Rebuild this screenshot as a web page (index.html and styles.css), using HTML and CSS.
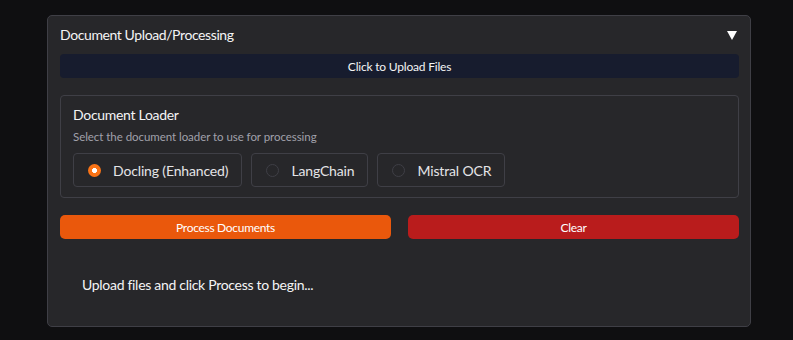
FILE: index.html
```html
<!DOCTYPE html>
<html>
<head>
<meta charset="utf-8">
<link rel="stylesheet" href="styles.css">
</head>
<body>
<div class="panel">
  <div class="panel-header">
    <span class="panel-title">Document Upload/Processing</span>
    <svg class="caret" width="10" height="9" viewBox="0 0 10 9"><polygon points="0,0 10,0 5,9" fill="#ffffff"/></svg>
  </div>
  <button class="upload-btn">Click to Upload Files</button>
  <div class="loader-box">
    <div class="loader-title">Document Loader</div>
    <div class="loader-sub">Select the document loader to use for processing</div>
    <div class="options">
      <label class="option"><span class="radio checked"></span><span class="opt-label">Docling (Enhanced)</span></label>
      <label class="option"><span class="radio"></span><span class="opt-label">LangChain</span></label>
      <label class="option"><span class="radio"></span><span class="opt-label">Mistral OCR</span></label>
    </div>
  </div>
  <div class="actions">
    <button class="btn btn-process">Process Documents</button>
    <button class="btn btn-clear">Clear</button>
  </div>
  <div class="status">Upload files and click Process to begin...</div>
</div>
</body>
</html>
```
FILE: styles.css
```css
html, body {
  margin: 0;
  padding: 0;
  background: #0f0f11;
}
body {
  padding: 15px 0 0 47px;
  font-family: Lato, "Noto Sans", sans-serif;
  color: #f4f4f5;
}
.panel {
  box-sizing: border-box;
  width: 704px;
  height: 312px;
  background: #27272a;
  border: 1px solid #3f3f46;
  border-radius: 5px;
  padding: 0 11px 0 12px;
}
.panel-header {
  display: flex;
  align-items: center;
  justify-content: space-between;
  height: 20px;
  padding: 9px 1px 9px 0;
}
.panel-title {
  font-size: 14px;
  line-height: 20px;
  letter-spacing: -0.4px;
  color: #f4f4f5;
}
.caret {
  display: block;
  margin-right: 1px;
}
.upload-btn {
  display: block;
  width: 100%;
  height: 24px;
  border: none;
  border-radius: 4px;
  background: #171c2e;
  color: #f4f4f5;
  font-family: inherit;
  font-size: 12px;
  letter-spacing: -0.2px;
  padding: 0;
}
.loader-box {
  margin-top: 17px;
  box-sizing: border-box;
  height: 103px;
  border: 1px solid #3f3f46;
  border-radius: 4px;
  padding: 9px 12px 0 12px;
}
.loader-title {
  font-size: 14px;
  line-height: 20px;
  letter-spacing: -0.3px;
  color: #f4f4f5;
}
.loader-sub {
  margin-top: 4px;
  font-size: 11.5px;
  line-height: 16px;
  letter-spacing: -0.05px;
  color: #a1a1aa;
}
.options {
  margin-top: 8px;
  display: flex;
  gap: 9px;
}
.option {
  box-sizing: border-box;
  height: 34px;
  display: flex;
  align-items: center;
  gap: 12px;
  padding: 0 13px 0 14px;
  border: 1px solid #3f3f46;
  border-radius: 4px;
}
.radio {
  box-sizing: border-box;
  width: 13px;
  height: 13px;
  border-radius: 50%;
  border: 1px solid #3f3f46;
  background: #27272a;
}
.radio.checked {
  border: none;
  background: radial-gradient(circle, #ffffff 0 2.2px, #f97316 2.8px);
}
.opt-label {
  font-size: 14px;
  letter-spacing: -0.15px;
  color: #e4e4e7;
}
.actions {
  margin-top: 17px;
  display: flex;
  gap: 17px;
}
.btn {
  flex: 1;
  height: 24px;
  border: none;
  border-radius: 5px;
  color: #ffffff;
  font-family: inherit;
  font-size: 12px;
  letter-spacing: -0.3px;
  padding: 0;
}
.btn-process {
  background: #ea580c;
}
.btn-clear {
  background: #b91c1c;
}
.status {
  margin-top: 36px;
  padding-left: 22px;
  font-size: 14px;
  line-height: 20px;
  letter-spacing: -0.3px;
  color: #f4f4f5;
}
```
